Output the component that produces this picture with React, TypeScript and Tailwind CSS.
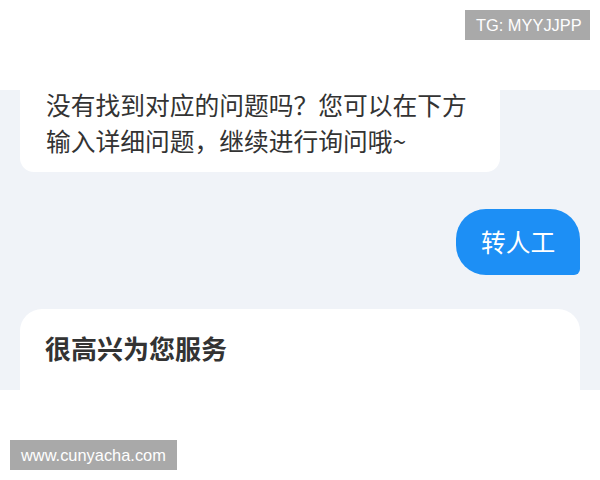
const cjk = "font-['Noto_Sans_CJK_SC','Noto_Sans',sans-serif]";

function Watermark({ text, className }: { text: string; className: string }) {
  return (
    <div
      className={`absolute whitespace-nowrap bg-[#a9a9a9] text-white text-[16.4px] leading-[30px] h-[30px] px-[11px] font-['Liberation_Sans',Arial,sans-serif] ${className}`}
    >
      {text}
    </div>
  );
}

export default function App() {
  return (
    <div className={`relative w-[600px] h-[480px] bg-white overflow-hidden ${cjk}`}>
      <div className="h-[90px] bg-white" />

      <div className="h-[300px] bg-[#f0f3f8] overflow-hidden">
        <div className="-mt-[20px] flex flex-col">
          {/* bot reply, top scrolled out of view */}
          <div className="mx-[20px] w-[480px] bg-white rounded-b-[14px] pt-[16px] pb-[14px] px-[26px] text-[#333333] text-[24.75px] leading-[36px]">
            <p>没有找到对应的问题吗？您可以在下方</p>
            <p>输入详细问题，继续进行询问哦~</p>
          </div>

          <div className="mt-[37px] mr-[20px] self-end w-[124px] h-[66px] bg-[#1d8ff5] rounded-[30px] rounded-br-[6px] flex items-center justify-center text-white text-[24.75px]">
            转人工
          </div>

          <div className="mt-[34px] mx-[20px] h-[120px] bg-white rounded-t-[22px] pt-[21px] px-[25px]">
            <h3 className="text-[26px] leading-[36px] font-bold text-[#333333]">很高兴为您服务</h3>
          </div>
        </div>
      </div>

      <Watermark text="TG: MYYJJPP" className="left-[465px] top-[10px] w-[125px]" />
      <Watermark text="www.cunyacha.com" className="left-[10px] top-[440px] w-[167px]" />
    </div>
  );
}
